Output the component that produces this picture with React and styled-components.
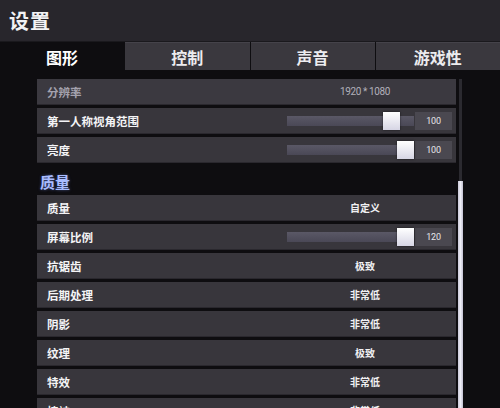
import React from "react";
import styled, { createGlobalStyle } from "styled-components";

const GlobalStyle = createGlobalStyle`
  html, body {
    margin: 0;
    padding: 0;
    background-color: #0e0d10;
    overflow: hidden;
  }
  body {
    font-family: "Noto Sans CJK SC", "Noto Sans", sans-serif;
  }
`;

const Screen = styled.div`
  width: 500px;
  height: 408px;
  overflow: hidden;
  background-color: #0e0d10;
`;

const Header = styled.div`
  height: 41px;
  display: flex;
  align-items: center;
  padding-left: 9px;
  background-color: #28262c;
  border-bottom: 1px solid #1a191d;
`;

const Title = styled.h1`
  margin: 0;
  font-size: 20px;
  font-weight: 700;
  color: #f2f2f4;
  letter-spacing: 1px;
`;

const TabBar = styled.div`
  display: grid;
  grid-template-columns: repeat(4, 1fr);
  column-gap: 1px;
  height: 28px;
  background-color: #0e0d10;
`;

const Tab = styled.div`
  display: flex;
  align-items: center;
  justify-content: center;
  font-size: 16px;
  font-weight: 700;
  color: ${(p) => (p.$active ? "#ffffff" : "#ececef")};
  background-color: ${(p) => (p.$active ? "#0e0d10" : "#3a383e")};
  border-top: 1px solid ${(p) => (p.$active ? "#0e0d10" : "#45434a")};
`;

const Content = styled.div`
  display: flex;
  padding: 9px 0 0 37px;
`;

const List = styled.div`
  width: 419px;
  display: flex;
  flex-direction: column;
  gap: 3px;
`;

const Scrollbar = styled.div`
  margin-left: 2px;
  width: 5px;
  height: 340px;
  display: flex;
  flex-direction: column;
`;

const ScrollTrack = styled.div`
  height: 102px;
  margin: 0 1px;
  background-color: #2b2a30;
`;

const ScrollThumb = styled.div`
  flex: 1;
  background: linear-gradient(90deg, #c9c8d8, #eeeef6 50%, #c2c1d2);
`;

const Row = styled.div`
  height: 26px;
  display: grid;
  grid-template-columns: 241px 174px;
  align-items: center;
  background-color: ${(p) => (p.$disabled ? "#3b3940" : "#38363c")};
  border-bottom: 1px solid #2a282e;
  box-sizing: border-box;
`;

const Label = styled.span`
  padding-left: 10px;
  font-size: 11.5px;
  font-weight: 700;
  color: ${(p) => (p.$disabled ? "#a4a2ae" : "#f4f4f6")};
`;

const Value = styled.span`
  text-align: center;
  font-size: ${(p) => (p.$disabled ? "10px" : "10px")};
  font-weight: ${(p) => (p.$disabled ? 400 : 700)};
  letter-spacing: ${(p) => (p.$disabled ? "-0.4px" : "0")};
  color: ${(p) => (p.$disabled ? "#b2b0ba" : "#f0f0f2")};
  font-family: ${(p) =>
    p.$disabled ? '"Roboto", "Noto Sans CJK SC", sans-serif' : "inherit"};
`;

const Section = styled.div`
  height: 26px;
  display: flex;
  align-items: center;
  padding: 4px 0 0 3px;
  box-sizing: border-box;
  font-size: 15px;
  font-weight: 700;
  color: #a9bcff;
  text-shadow: 0 0 3px rgba(120, 150, 255, 0.5);
`;

const SliderCell = styled.div`
  display: flex;
  align-items: center;
  padding-left: 9px;
  gap: 1px;
`;

const Track = styled.div`
  position: relative;
  width: 127px;
  height: 10px;
  background: linear-gradient(180deg, #5a5866, #4a4856);
`;

const Thumb = styled.div`
  position: absolute;
  top: -4px;
  width: 17px;
  height: 18px;
  background: linear-gradient(180deg, #ffffff, #d6d5e4);
  box-shadow: 0 0 2px rgba(0, 0, 0, 0.6);
`;

const NumberBox = styled.div`
  width: 37px;
  height: 18px;
  display: flex;
  align-items: center;
  justify-content: center;
  background-color: #4a4850;
  font-family: "Roboto", sans-serif;
  font-size: 9px;
  letter-spacing: -0.3px;
  color: #e6e6ea;
`;

const tabs = ["图形", "控制", "声音", "游戏性"];

const Slider = ({ pct, value }) => (
  <SliderCell>
    <Track>
      <Thumb style={{ left: `${(pct / 100) * 110}px` }} />
    </Track>
    <NumberBox>{value}</NumberBox>
  </SliderCell>
);

const SettingRow = ({ label, value, slider, disabled }) => (
  <Row $disabled={disabled}>
    <Label $disabled={disabled}>{label}</Label>
    {slider ? (
      <Slider pct={slider} value={value} />
    ) : (
      <Value $disabled={disabled}>{value}</Value>
    )}
  </Row>
);

const App = () => {
  return (
    <Screen>
      <GlobalStyle />
      <Header>
        <Title>设置</Title>
      </Header>
      <TabBar>
        {tabs.map((t, i) => (
          <Tab key={t} $active={i === 0}>
            {t}
          </Tab>
        ))}
      </TabBar>
      <Content>
        <List>
          <SettingRow label="分辨率" value="1920 * 1080" disabled />
          <SettingRow label="第一人称视角范围" value="100" slider={87} />
          <SettingRow label="亮度" value="100" slider={100} />
          <Section>质量</Section>
          <SettingRow label="质量" value="自定义" />
          <SettingRow label="屏幕比例" value="120" slider={100} />
          <SettingRow label="抗锯齿" value="极致" />
          <SettingRow label="后期处理" value="非常低" />
          <SettingRow label="阴影" value="非常低" />
          <SettingRow label="纹理" value="极致" />
          <SettingRow label="特效" value="非常低" />
          <SettingRow label="植被" value="非常低" />
        </List>
        <Scrollbar>
          <ScrollTrack />
          <ScrollThumb />
        </Scrollbar>
      </Content>
    </Screen>
  );
};

export default App;
